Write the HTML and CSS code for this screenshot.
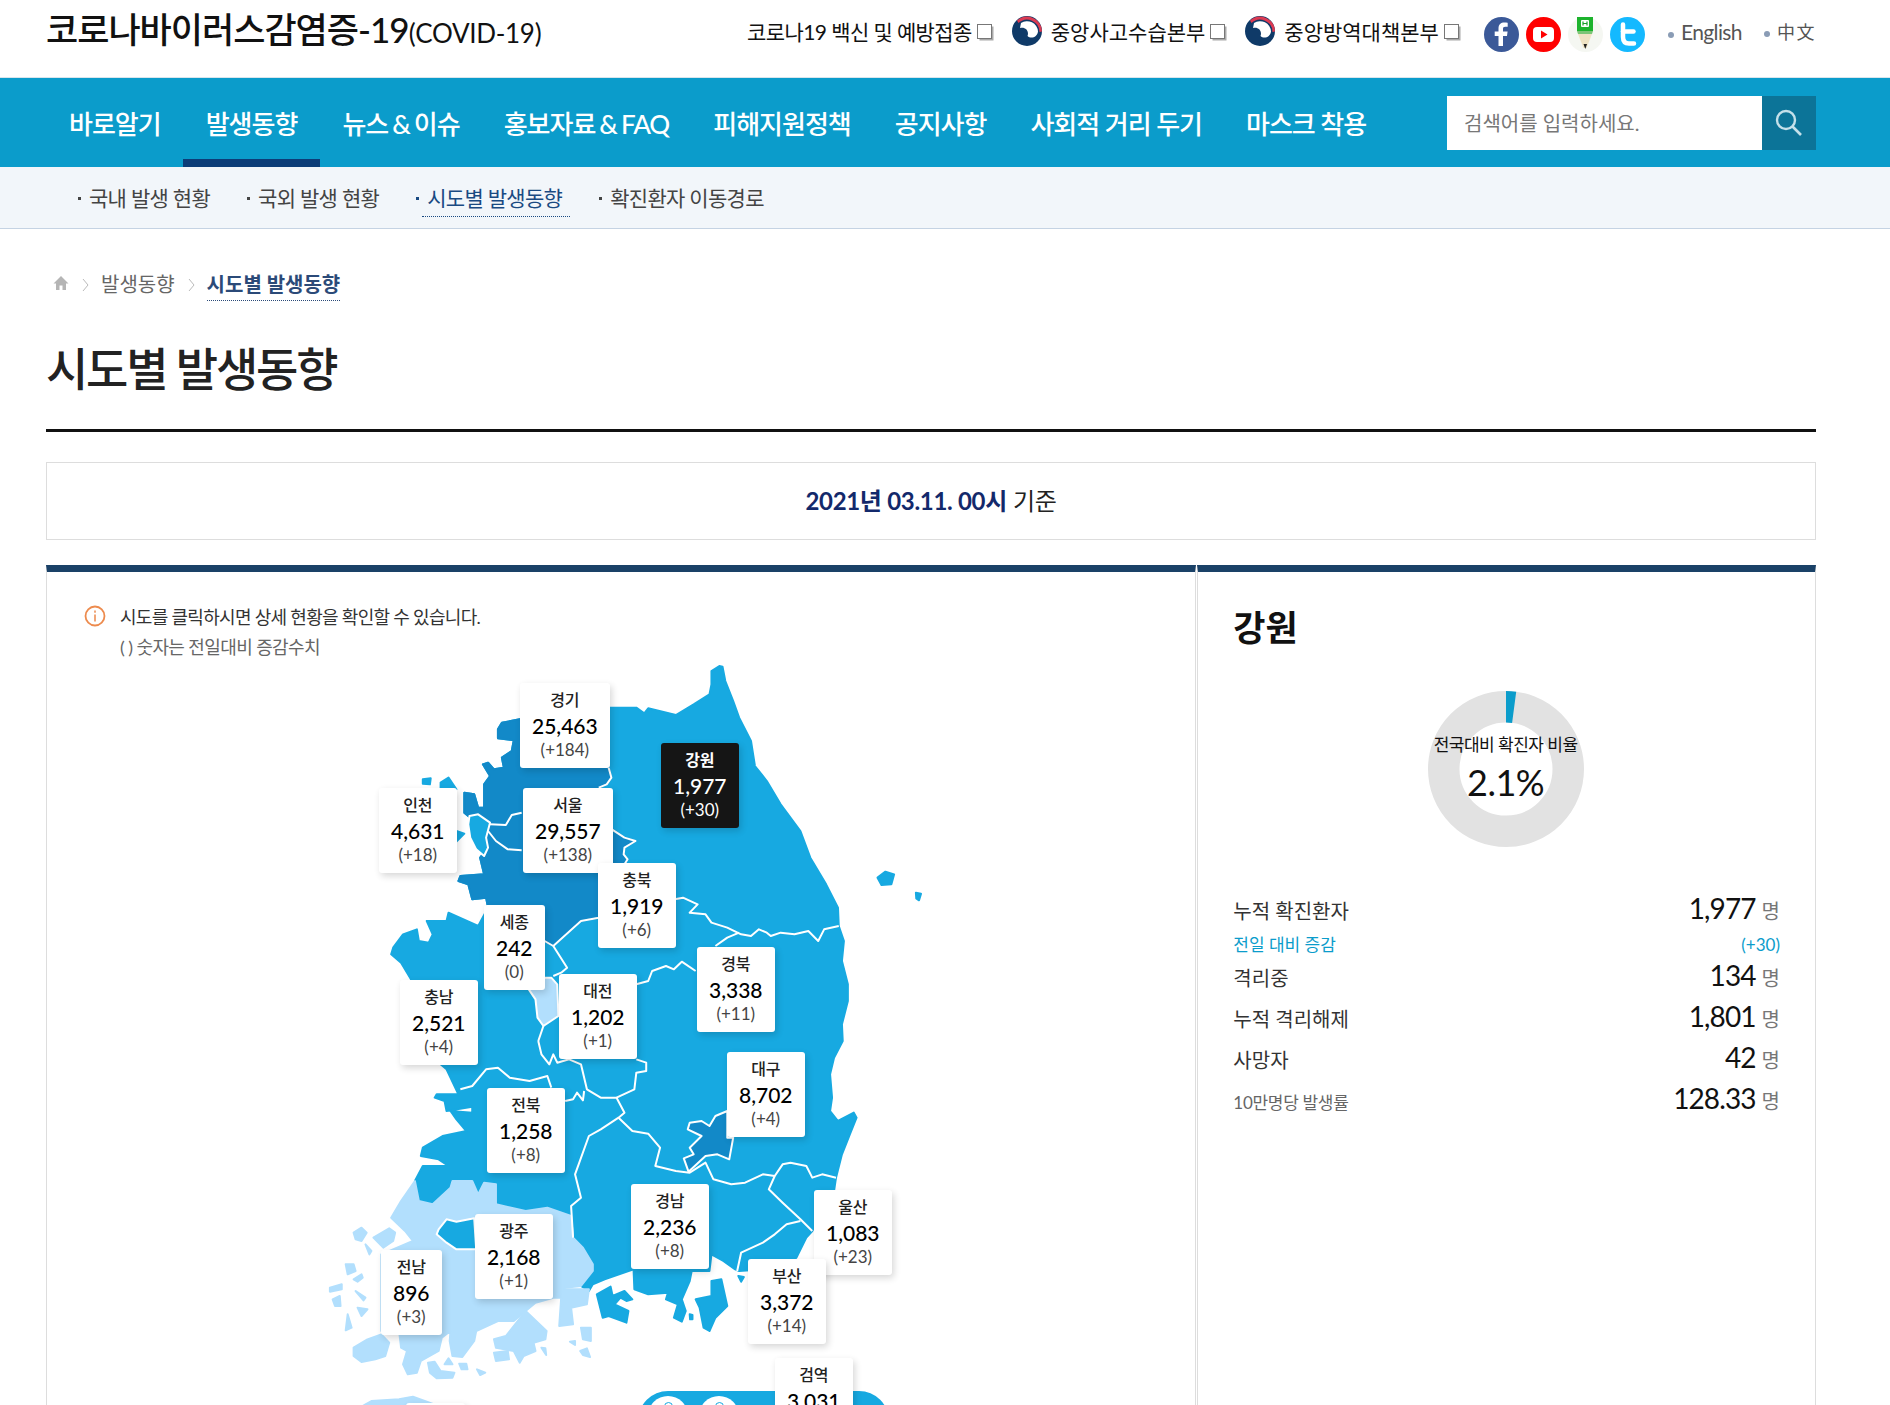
FILE: index.html
```html
<!DOCTYPE html>
<html lang="ko">
<head>
<meta charset="utf-8">
<title>시도별 발생동향</title>
<link rel="stylesheet" href="styles.css">
</head>
<body>
<header class="top">
  <div class="logo">코로나바이러스감염증-19<small>(COVID-19)</small></div>
  <div class="util">
    <a class="ext first">코로나19 백신 및 예방접종<i class="tofu"></i></a>
    <a class="ext">
      <svg class="gov" viewBox="0 0 30 30"><circle cx="15" cy="15" r="15" fill="#0f3a68"/><path d="M5 4.500A15 15 0 0 1 30 15.500L27.500 16A12.500 12.500 0 0 0 6.500 7Z" fill="#dc3a52"/><path d="M9 7A11 11 0 0 1 26 15.500C25.500 21 19 23.500 15.500 20C17.500 14.500 13 10.500 8 12Z" fill="#fff"/></svg>
      중앙사고수습본부<i class="tofu"></i></a>
    <a class="ext">
      <svg class="gov" viewBox="0 0 30 30"><circle cx="15" cy="15" r="15" fill="#0f3a68"/><path d="M5 4.500A15 15 0 0 1 30 15.500L27.500 16A12.500 12.500 0 0 0 6.500 7Z" fill="#dc3a52"/><path d="M9 7A11 11 0 0 1 26 15.500C25.500 21 19 23.500 15.500 20C17.500 14.500 13 10.500 8 12Z" fill="#fff"/></svg>
      중앙방역대책본부<i class="tofu"></i></a>
    <div class="sns">
      <svg viewBox="0 0 35 35"><circle cx="17.500" cy="17.500" r="17.500" fill="#3b5998"/><path d="M19 29V19h4l.6-4.500H19v-2.600c0-1.400.5-2.200 2.300-2.200h2.400V5.800c-.7-.1-2-.2-3.300-.2-3.500 0-5.900 2-5.900 5.800v3.100h-3.800V19h3.800v10Z" fill="#fff"/></svg>
      <svg viewBox="0 0 35 35"><circle cx="17.500" cy="17.500" r="17.500" fill="#f00"/><rect x="7" y="10" width="21" height="15" rx="4" fill="#fff"/><path d="M15 13.500v8l6.500-4Z" fill="#f00"/></svg>
      <svg viewBox="0 0 35 35"><circle cx="17.500" cy="17.500" r="17.500" fill="#f5f7f2"/><path d="M9 0h16v14H9Z" fill="#1db32d"/><path d="M9 14h16l-1 3H10Z" fill="#7cc576"/><rect x="13" y="3" width="8" height="7" rx="1" fill="#fff"/><path d="M15 4.500v4M19 4.500v4M15 6.500h4" stroke="#1b9e2a" stroke-width="1.200"/><path d="M10 17h14l-5.500 14h-3Z" fill="#efe3c4"/><path d="M15.500 27h3.500l-1.700 5Z" fill="#222"/></svg>
      <svg viewBox="0 0 35 35"><circle cx="17.500" cy="17.500" r="17.500" fill="#14b9ff"/><path d="M13 7.500V20c0 4.500 2.500 6.500 6 6.500h5" fill="none" stroke="#fff" stroke-width="4.500" stroke-linecap="round"/><path d="M13 14.500h10.500" fill="none" stroke="#fff" stroke-width="4.500" stroke-linecap="round"/></svg>
    </div>
    <a class="lang en">English</a>
    <a class="lang zh">中文</a>
  </div>
</header>

<nav class="gnb">
  <ul class="gnb-list">
    <li>바로알기</li>
    <li class="on">발생동향</li>
    <li>뉴스<span class="amp">&amp;</span>이슈</li>
    <li>홍보자료<span class="amp">&amp;</span>FAQ</li>
    <li>피해지원정책</li>
    <li>공지사항</li>
    <li>사회적 거리 두기</li>
    <li>마스크 착용</li>
  </ul>
  <div class="search">
    <span class="search-input">검색어를 입력하세요.</span>
    <span class="search-btn"><svg viewBox="0 0 28 28" width="28" height="28"><circle cx="11" cy="11" r="9" fill="none" stroke="#c4e0ea" stroke-width="2.400"/><path d="M17.500 17.500l8.500 8.500" stroke="#c4e0ea" stroke-width="2.600"/></svg></span>
  </div>
</nav>

<div class="lnb">
  <a class="lnb-item">국내 발생 현황</a>
  <a class="lnb-item">국외 발생 현황</a>
  <a class="lnb-item on">시도별 발생동향</a>
  <a class="lnb-item">확진환자 이동경로</a>
</div>

<main class="page">
  <div class="crumb">
    <svg class="home" viewBox="0 0 16 16"><path d="M8 1L0.500 8.500H3V15h3.500v-4.500h3V15H13V8.500h2.500Z" fill="#b5b5b5"/></svg>
    <svg class="chev" viewBox="0 0 7 14"><path d="M1 1l5 6-5 6" fill="none" stroke="#bbb"/></svg>
    <span>발생동향</span>
    <svg class="chev" viewBox="0 0 7 14"><path d="M1 1l5 6-5 6" fill="none" stroke="#bbb"/></svg>
    <b>시도별 발생동향</b>
  </div>
  <h1 class="title">시도별 발생동향</h1>
  <div class="date"><b>2021년 03.11. 00시</b> 기준</div>

  <section class="board">
    <div class="left">
      <div class="notice">
        <svg class="info" viewBox="0 0 22 22"><circle cx="11" cy="11" r="9.500" fill="none" stroke="#ed8b4e" stroke-width="1.800"/><rect x="10" y="9.500" width="2" height="7" fill="#f0a678"/><rect x="10" y="5.500" width="2" height="2.200" fill="#f0a678"/></svg>
        <p>시도를 클릭하시면 상세 현황을 확인할 수 있습니다.</p>
        <p class="sub">( ) 숫자는 전일대비 증감수치</p>
      </div>
      <div class="map">
        <svg class="map-svg" viewBox="0 0 1568 2265" preserveAspectRatio="none">
          <polygon class="land" points="1010,45 1018,47 1025,90 1045,150 1060,200 1090,270 1100,345 1130,390 1165,460 1215,540 1240,620 1280,700 1310,770 1312,825 1325,870 1320,930 1335,1000 1335,1050 1320,1120 1322,1170 1300,1220 1290,1270 1295,1340 1290,1380 1310,1410 1350,1385 1357,1400 1340,1450 1320,1510 1305,1580 1300,1620 1245,1740 1230,1760 1205,1820 1180,1850 1060,1860 1050,1855 1020,1830 990,1810 985,1860 940,1860 935,1890 915,1945 925,1980 915,2012 895,2000 905,1960 875,1945 880,1925 830,1930 795,1915 793,1855 720,1885 690,1900 680,1920 660,1905 690,1860 690,1840 665,1790 640,1760 635,1695 575,1670 520,1680 445,1660 445,1600 415,1595 400,1630 385,1590 335,1590 330,1610 285,1660 250,1650 240,1590 260,1545 325,1545 300,1525 255,1515 260,1490 310,1455 370,1440 345,1405 330,1380 385,1385 385,1367 320,1380 315,1350 290,1340 295,1330 350,1330 320,1255 305,1240 240,1190 230,985 205,935 180,910 185,890 210,850 245,835 250,870 275,875 285,850 270,810 320,810 325,785 400,825 425,770 420,740 385,745 375,700 350,690 355,675 415,670 405,620 425,590 425,545 378,498 365,485 365,425 390,430 400,470 415,470 415,400 430,375 412,340 425,335 440,355 465,350 460,320 485,300 490,268 450,262 450,235 460,215 505,205 560,170 730,170 800,170 820,187 830,172 900,192 945,160 985,130 990,100 990,60"/>
          <polygon class="land" points="1410,680 1430,662 1452,670 1445,700 1420,702"/>
          <polygon class="land" points="1507,725 1520,728 1515,748 1508,742"/>
          <polygon class="land" points="260,385 280,382 278,400 260,398"/>
          <polygon class="land" points="305,395 325,380 345,415 305,415"/>
          <polygon class="land" points="345,540 365,548 345,572"/>
          <polygon class="dark" points="450,235 460,215 505,205 560,170 730,170 730,350 737,380 725,400 705,410 738,535 770,560 798,570 770,590 768,610 778,625 770,640 770,720 705,800 660,810 590,885 568,870 425,770 420,740 385,745 375,700 350,690 355,675 415,670 405,620 425,590 425,545 378,498 365,485 365,425 390,430 400,470 415,470 415,400 430,375 412,340 425,335 440,355 465,350 460,320 485,300 490,268 450,262"/>
          <polygon class="land edge" points="378,495 400,490 430,515 420,560 425,590 415,615 395,595 380,560 375,520"/>
          <polygon class="pale edge" points="528,1015 570,980 585,980 600,1000 603,1095 565,1125 550,1100 545,1045"/>
          <polyline class="line" points="430,520 470,522 485,492 510,485"/>
          <polyline class="line" points="425,540 445,570 475,595 510,598"/>
          <polyline class="line" points="730,350 737,380 725,400 705,410"/>
          <polyline class="line" points="738,535 770,560 798,570 770,590 768,610 778,625 770,640"/>
          <polyline class="line" points="897,745 918,740 955,760 935,785 975,790 990,815 1030,830 1065,850 1090,855 1110,835 1130,845 1140,855 1165,845 1200,850 1235,840 1260,870 1275,835 1312,825"/>
          <polyline class="line" points="770,720 705,800 660,810 590,885 568,870"/>
          <polyline class="line" points="590,885 625,950 610,965 590,975"/>
          <polyline class="line" points="800,1000 830,990 840,960 875,945 895,955 915,932 950,960"/>
          <polyline class="line" points="1000,885 1030,860 1060,845"/>
          <polyline class="line" points="565,1125 552,1170"/>
          <g transform="translate(0 1170)">
            <polygon class="pale" points="240,420 250,480 285,490 330,440 335,420 385,420 400,460 415,425 445,430 445,490 520,510 575,500 635,525 640,590 665,620 690,670 690,690 660,735 620,740 610,770 590,770 545,785 520,810 490,840 450,840 395,870 390,900 360,948 335,945 328,900 330,870 308,890 300,930 255,960 245,995 222,1000 210,970 220,930 205,920 200,870 155,870 155,640 235,600 215,570 180,530 205,480"/>
            <polygon class="pale" points="480,870 520,810 573,870 570,895 540,905 545,930 515,945 505,965 490,930 445,920 440,895 470,885"/>
            <polygon class="pale" points="440,935 475,930 478,955 445,960"/>
            <polygon class="pale" points="85,920 120,895 155,880 175,905 165,945 140,955 105,963 85,945"/>
            <polygon class="pale" points="273,965 290,962 305,990 340,995 335,1010 295,1012 278,995"/>
            <polygon class="pale" points="315,970 325,952 335,970"/>
            <polygon class="pale" points="352,968 370,968 373,985 358,985"/>
            <polygon class="pale" points="397,985 418,995 405,1002"/>
            <polygon class="pale" points="560,920 570,922 572,942"/>
            <polygon class="pale" points="632,902 645,900 645,912"/>
            <polygon class="pale" points="658,930 675,922 683,948 665,942"/>
            <polygon class="pale" points="660,860 685,860 685,900 665,895"/>
            <polygon class="pale" points="620,745 680,745 675,790 635,800 640,850 605,855 610,770"/>
            <polygon class="pale" points="85,575 105,560 118,575 105,600 90,595"/>
            <polygon class="pale" points="135,590 175,562 190,575 185,600 160,620"/>
            <polygon class="pale" points="115,610 130,630 125,640"/>
            <polygon class="pale" points="65,670 85,670 90,690 70,700"/>
            <polygon class="pale" points="85,715 105,700 108,710 95,722"/>
            <polygon class="pale" points="25,740 55,730 55,745 25,752"/>
            <polygon class="pale" points="90,750 115,770 110,778"/>
            <polygon class="pale" points="32,775 50,765 52,795 38,795"/>
            <polygon class="pale" points="95,800 120,805 105,825"/>
            <polygon class="pale" points="70,820 80,860 65,868"/>
            <polygon class="pale" points="108,1095 130,1080 200,1075 235,1067 270,1082 300,1095"/>
            <polygon class="land" points="700,760 735,737 740,765 770,750 790,775 775,780 760,770 745,790 780,810 775,845 730,825 715,830"/>
            <polygon class="land" points="950,775 990,765 990,720 1015,715 1030,795 1000,830 985,870 970,860 960,800"/>
            <polygon class="land" points="1058,705 1072,708 1065,722"/>
            <polygon class="land" points="935,820 942,822 942,835 936,835"/>
            <polygon class="land edge" points="300,565 320,535 345,542 390,532 395,625 345,625 320,605 295,580"/>
            <polygon class="dark edge" points="1030,210 1000,225 985,255 965,240 935,245 930,265 965,285 935,320 945,340 920,352 932,392 975,345 1005,340 1035,355 1045,290 1030,290"/>
            <polyline class="line" points="552,0 560,40 580,70 590,40 600,65 630,55 660,70 675,145 710,170 750,170 770,215 755,230 710,265 680,285 645,400 660,470 635,495 640,590"/>
            <polyline class="line" points="355,145 385,135 420,85 450,80 480,110 530,120 575,105 585,140"/>
            <polyline class="line" points="620,180 640,175 650,155 665,178 668,150"/>
            <polyline class="line" points="800,55 825,65 825,90 800,95 795,145 750,170"/>
            <polyline class="line" points="755,230 790,270 830,278 860,320 848,375 900,390 935,395 975,365 995,415 1040,430 1075,425 1120,400 1150,405 1170,370 1190,365 1230,375 1245,410 1270,400 1305,410"/>
            <polyline class="line" points="1150,405 1135,445 1170,485 1215,535 1245,570"/>
            <polyline class="line" points="1215,540 1180,550 1150,580 1120,605 1065,635 1055,690"/>
          </g>
        </svg>

        <div class="pill"><span class="pill-btn"></span><span class="pill-btn"></span></div>

        <div class="pin gg"><h4>경기</h4><strong>25,463</strong><em>(+184)</em></div>
        <div class="pin gw sel"><h4>강원</h4><strong>1,977</strong><em>(+30)</em></div>
        <div class="pin ic"><h4>인천</h4><strong>4,631</strong><em>(+18)</em></div>
        <div class="pin se"><h4>서울</h4><strong>29,557</strong><em>(+138)</em></div>
        <div class="pin cb"><h4>충북</h4><strong>1,919</strong><em>(+6)</em></div>
        <div class="pin sj"><h4>세종</h4><strong>242</strong><em>(0)</em></div>
        <div class="pin gb"><h4>경북</h4><strong>3,338</strong><em>(+11)</em></div>
        <div class="pin dj"><h4>대전</h4><strong>1,202</strong><em>(+1)</em></div>
        <div class="pin cn"><h4>충남</h4><strong>2,521</strong><em>(+4)</em></div>
        <div class="pin dg"><h4>대구</h4><strong>8,702</strong><em>(+4)</em></div>
        <div class="pin jb"><h4>전북</h4><strong>1,258</strong><em>(+8)</em></div>
        <div class="pin gn"><h4>경남</h4><strong>2,236</strong><em>(+8)</em></div>
        <div class="pin us"><h4>울산</h4><strong>1,083</strong><em>(+23)</em></div>
        <div class="pin gj"><h4>광주</h4><strong>2,168</strong><em>(+1)</em></div>
        <div class="pin jn"><h4>전남</h4><strong>896</strong><em>(+3)</em></div>
        <div class="pin bs"><h4>부산</h4><strong>3,372</strong><em>(+14)</em></div>
        <div class="pin qr"><h4>검역</h4><strong>3,031</strong></div>
        <div class="pin jj"></div>
      </div>
    </div>

    <aside class="right">
      <h2 class="region">강원</h2>
      <div class="donut">
        <svg viewBox="0 0 156 156" width="156" height="156"><circle cx="78" cy="78" r="62.250" fill="none" stroke="#e2e2e2" stroke-width="31.500"/><path d="M78 0A78 78 0 0 1 88.200 .7L84.100 31.900A46.500 46.500 0 0 0 78 31.500Z" fill="#0b9ccb"/></svg>
        <p class="donut-label">전국대비 확진자 비율</p>
        <p class="donut-value">2.1%</p>
      </div>
      <ul class="stats">
        <li class="total"><span>누적 확진환자</span><span><b>1,977</b><i>명</i></span></li>
        <li class="delta"><span>전일 대비 증감</span><span>(+30)</span></li>
        <li class="spaced"><span>격리중</span><span><b>134</b><i>명</i></span></li>
        <li class="spaced"><span>누적 격리해제</span><span><b>1,801</b><i>명</i></span></li>
        <li class="spaced"><span>사망자</span><span><b>42</b><i>명</i></span></li>
        <li class="rate"><span>10만명당 발생률</span><span><b>128.33</b><i>명</i></span></li>
      </ul>
    </aside>
  </section>
</main>
</body>
</html>
```
FILE: styles.css
```css
* { box-sizing: border-box; }
html, body { margin: 0; height: 1405px; overflow: hidden; background: #fff; }
body { font-family: Lato, "Noto Sans CJK KR", sans-serif; color: #111; }
h1, h2, h4, p, ul { margin: 0; padding: 0; }
ul { list-style: none; }
em, i { font-style: normal; }

.top { height: 78px; display: flex; align-items: center; justify-content: space-between; padding: 0 74px 15px 46px; border-bottom: 1px solid #d9e5ec; }
.logo { font-size: 35px; font-weight: 500; letter-spacing: -1px; color: #111; margin-bottom: 7px; white-space: nowrap; }
.logo small { font-size: 26px; font-weight: 400; letter-spacing: -0.3px; }
.util { display: flex; align-items: center; }
.ext { display: flex; align-items: center; font-size: 21px; margin-right: 20px; color: #111; white-space: nowrap; }
.ext.first { letter-spacing: -0.6px; }
.gov { width: 30px; height: 30px; margin-right: 9px; }
.tofu { display: block; width: 15px; height: 15px; margin-left: 5px; border: 1px solid #777; box-shadow: 2px 2px 0 -0.500px #aaa; background: #fff; }
.sns { display: flex; gap: 7px; margin: 7px 23px 0 5px; }
.sns svg { width: 35px; height: 35px; }
.lang { font-size: 21px; color: #555; position: relative; padding-left: 13px; }
.lang::before { content: ""; position: absolute; left: 0; top: 13px; width: 6px; height: 6px; border-radius: 50%; background: #8a9cb5; }
.en { letter-spacing: -0.6px; margin-right: 22px; }
.zh { font-size: 18px; letter-spacing: 1.500px; padding-left: 13px; }

.gnb { height: 89px; background: #0b9ccb; display: flex; justify-content: space-between; padding: 0 74px 0 47px; }
.gnb-list { display: flex; }
.gnb-list li { padding: 0 22px; height: 89px; line-height: 92px; font-size: 26px; font-weight: 500; color: #fff; letter-spacing: -1px; white-space: nowrap; }
.gnb-list li.on { border-bottom: 8px solid #0d3d78; padding: 0 23px; }
.amp { margin: 0 4px; }
.search { display: flex; height: 54px; margin-top: 18px; }
.search-input { width: 315px; background: #fff; font-size: 20px; line-height: 54px; padding-left: 17px; color: #777; }
.search-btn { width: 54px; background: #0c7498; display: flex; align-items: center; justify-content: center; }

.lnb { height: 62px; background: #f2f6fa; border-bottom: 1px solid #c5d3e3; padding-left: 78px; display: flex; gap: 29px; }
.lnb-item { position: relative; margin-left: 6px; padding: 17px 8px 3px 5px; height: 50px; font-size: 21px; letter-spacing: -0.7px; line-height: 28px; color: #444; white-space: nowrap; }
.lnb-item::before { content: ""; position: absolute; left: -6px; top: 30px; width: 3px; height: 3px; background: #444; }
.lnb-item.on { color: #1a4a82; border-bottom: 1px dotted #1a4a82; }
.lnb-item.on::before { background: #1a4a82; }

.page { padding: 0 74px 0 46px; }
.crumb { height: 36px; margin-top: 39px; display: flex; align-items: flex-start; font-size: 20px; line-height: 32px; color: #666; }
.home { width: 16px; height: 16px; margin: 7px 0 0 7px; }
.chev { width: 7px; height: 14px; margin: 10px 12px 0 13px; }
.crumb b { font-weight: 700; color: #2b4a78; border-bottom: 1px dotted #2b4a78; height: 33px; }
.title { height: 128px; padding-top: 32px; line-height: 66px; font-size: 46px; font-weight: 500; letter-spacing: -2.200px; color: #222; border-bottom: 3px solid #111; }
.date { height: 78px; margin-top: 30px; padding-bottom: 3px; border: 1px solid #ddd; display: flex; align-items: center; justify-content: center; gap: 6px; font-size: 24px; letter-spacing: -0.3px; color: #222; }
.date b { color: #13296b; font-weight: 700; }

.board { display: flex; margin-top: 25px; gap: 1px; height: 900px; }
.left { width: 1151px; border: 1px solid #ddd; border-top: 7px solid #1a4167; position: relative; }
.right { width: 619px; border: 1px solid #ddd; border-top: 7px solid #1a4167; padding: 0 35px; }

.notice { height: 79px; padding: 30px 0 0 73px; position: relative; font-size: 18px; line-height: 30px; letter-spacing: -0.7px; color: #333; }
.notice .sub { color: #666; letter-spacing: -0.6px; }
.info { position: absolute; left: 37px; top: 33px; width: 22px; height: 22px; }

.map { position: relative; width: 620px; height: 755px; margin-left: 273px; }
.map-svg { display: block; width: 620px; height: 755px; }
.land { fill: #17a9e1; stroke: #17a9e1; }
.dark { fill: #1289c8; stroke: #1289c8; }
.pale { fill: #b2dffd; stroke: #b2dffd; }
.land, .dark, .pale { stroke-width: 2px; stroke-linejoin: round; vector-effect: non-scaling-stroke; }
.edge { stroke: #fff; }
.line { fill: none; stroke: #fff; stroke-width: 2px; stroke-linejoin: round; vector-effect: non-scaling-stroke; }

.pill { position: absolute; left: 318px; top: 740px; width: 251px; height: 80px; border-radius: 30px 30px 0 0; background: #17a9e1; display: flex; gap: 11px; padding: 5px 0 0 10px; }
.pill-btn { width: 40px; height: 40px; border-radius: 50%; background: #fff; position: relative; }
.pill-btn::before { content: ""; position: absolute; left: 16px; top: 6px; width: 7px; height: 7px; border-radius: 50%; border: 1px solid #17a9e1; }

.pin { position: absolute; height: 85px; padding: 5px 12px 0; background: #fff; border-radius: 3px; box-shadow: 2px 3px 7px rgba(0, 0, 0, .16); text-align: center; white-space: nowrap; }
.pin h4 { font-size: 16px; line-height: 24px; font-weight: 500; letter-spacing: -0.2px; color: #222; }
.pin strong { display: block; font-size: 21px; line-height: 27px; font-weight: 500; color: #000; }
.pin em { display: block; font-size: 17px; line-height: 22px; color: #444; }
.pin.sel { background: #151515; }
.pin.sel h4, .pin.sel strong, .pin.sel em { color: #fff; }
.pin.sel h4 { font-weight: 700; }
.gg { left: 200px; top: 32px; }
.gw { left: 341px; top: 92px; }
.ic { left: 59px; top: 137px; }
.se { left: 203px; top: 137px; }
.cb { left: 278px; top: 212px; }
.sj { left: 164px; top: 254px; }
.gb { left: 377px; top: 296px; }
.dj { left: 239px; top: 323px; }
.cn { left: 80px; top: 329px; }
.dg { left: 407px; top: 401px; }
.jb { left: 167px; top: 437px; }
.gn { left: 311px; top: 533px; }
.us { left: 494px; top: 539px; }
.gj { left: 155px; top: 563px; }
.jn { left: 61px; top: 599px; }
.bs { left: 428px; top: 608px; }
.qr { left: 455px; top: 707px; }
.jj { left: 86px; top: 752px; width: 59px; }

.region { font-size: 35px; line-height: 50px; font-weight: 700; color: #111; margin-top: 30px; }
.donut { position: relative; width: 156px; height: 156px; margin: 39px auto 0; left: -1px; }
.donut svg { display: block; }
.donut-label { position: absolute; left: -20px; right: -20px; top: 42px; text-align: center; font-size: 17px; line-height: 24px; letter-spacing: -0.5px; color: #111; }
.donut-value { position: absolute; left: 0; right: 0; top: 68px; text-align: center; font-size: 36px; line-height: 46px; color: #111; letter-spacing: -0.500px; }

.stats { margin-top: 44px; }
.stats li { display: flex; justify-content: space-between; align-items: baseline; height: 34px; line-height: 34px; font-size: 20px; color: #333; }
.stats li.total { height: 36px; }
.stats li.spaced { margin-bottom: 7px; }
.stats b { font-weight: 400; font-size: 28px; color: #111; letter-spacing: -0.900px; }
.stats i { font-size: 20px; color: #777; margin-left: 6px; }
.stats li.delta { height: 30px; margin-top: 1px; font-size: 17px; color: #0b9ccb; }
.stats .rate span:first-child { font-size: 17px; color: #666; letter-spacing: -0.3px; }
```
